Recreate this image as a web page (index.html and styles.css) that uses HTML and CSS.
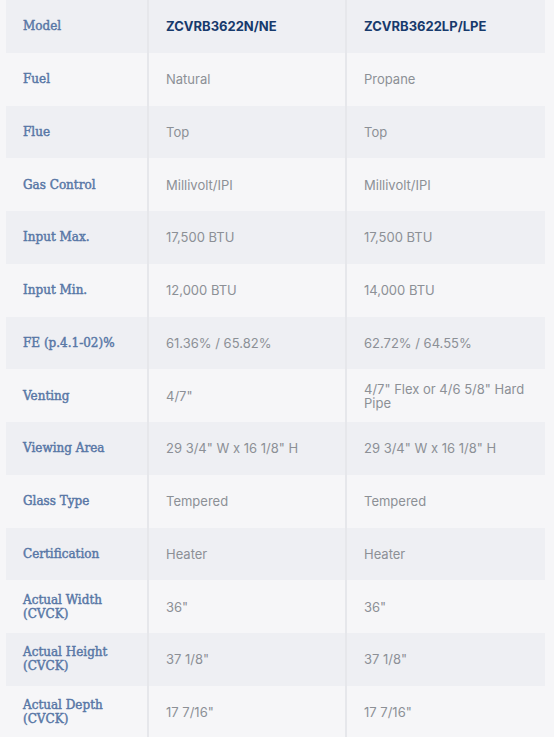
FILE: index.html
```html
<!DOCTYPE html>
<html lang="en">
<head>
<meta charset="utf-8">
<title>Specifications</title>
<link rel="stylesheet" href="styles.css">
</head>
<body>
<div class="specs">
  <div class="row head"><div class="cell label">Model</div><div class="cell model">ZCVRB3622N/NE</div><div class="cell model">ZCVRB3622LP/LPE</div></div>
  <div class="row"><div class="cell label">Fuel</div><div class="cell val">Natural</div><div class="cell val">Propane</div></div>
  <div class="row"><div class="cell label">Flue</div><div class="cell val">Top</div><div class="cell val">Top</div></div>
  <div class="row"><div class="cell label">Gas Control</div><div class="cell val">Millivolt/IPI</div><div class="cell val">Millivolt/IPI</div></div>
  <div class="row"><div class="cell label">Input Max.</div><div class="cell val">17,500 BTU</div><div class="cell val">17,500 BTU</div></div>
  <div class="row"><div class="cell label">Input Min.</div><div class="cell val">12,000 BTU</div><div class="cell val">14,000 BTU</div></div>
  <div class="row"><div class="cell label">FE (p.4.1-02)%</div><div class="cell val">61.36% / 65.82%</div><div class="cell val">62.72% / 64.55%</div></div>
  <div class="row"><div class="cell label">Venting</div><div class="cell val">4/7"</div><div class="cell val">4/7" Flex or 4/6 5/8" Hard Pipe</div></div>
  <div class="row"><div class="cell label">Viewing Area</div><div class="cell val">29 3/4" W x 16 1/8" H</div><div class="cell val">29 3/4" W x 16 1/8" H</div></div>
  <div class="row"><div class="cell label">Glass Type</div><div class="cell val">Tempered</div><div class="cell val">Tempered</div></div>
  <div class="row"><div class="cell label">Certification</div><div class="cell val">Heater</div><div class="cell val">Heater</div></div>
  <div class="row"><div class="cell label">Actual Width (CVCK)</div><div class="cell val">36"</div><div class="cell val">36"</div></div>
  <div class="row"><div class="cell label">Actual Height (CVCK)</div><div class="cell val">37 1/8"</div><div class="cell val">37 1/8"</div></div>
  <div class="row"><div class="cell label">Actual Depth (CVCK)</div><div class="cell val">17 7/16"</div><div class="cell val">17 7/16"</div></div>
</div>
</body>
</html>
```

FILE: styles.css
```css
html, body {
  margin: 0;
  padding: 0;
  background: #f6f6f8;
}
body {
  padding-left: 6px;
}
.specs {
  width: 539px;
}
.row {
  display: grid;
  grid-template-columns: 141px 198px 200px;
  height: 52.75px;
}
.row:nth-child(odd) {
  background: #eeeff3;
}
.cell {
  display: flex;
  align-items: center;
  padding: 0 17px;
  line-height: 14px;
}
.cell + .cell {
  border-left: 2px solid #e6e7eb;
}
.label {
  font-family: "DejaVu Serif", serif;
  font-size: 12px;
  color: #5877a6;
  -webkit-text-stroke: 0.45px #5877a6;
  padding-right: 16px;
}
.val {
  font-family: Inter, "Liberation Sans", sans-serif;
  font-size: 13px;
  color: #8c9096;
}
.model {
  font-family: Inter, "Liberation Sans", sans-serif;
  font-size: 13px;
  font-weight: 700;
  color: #173a6c;
}
```
